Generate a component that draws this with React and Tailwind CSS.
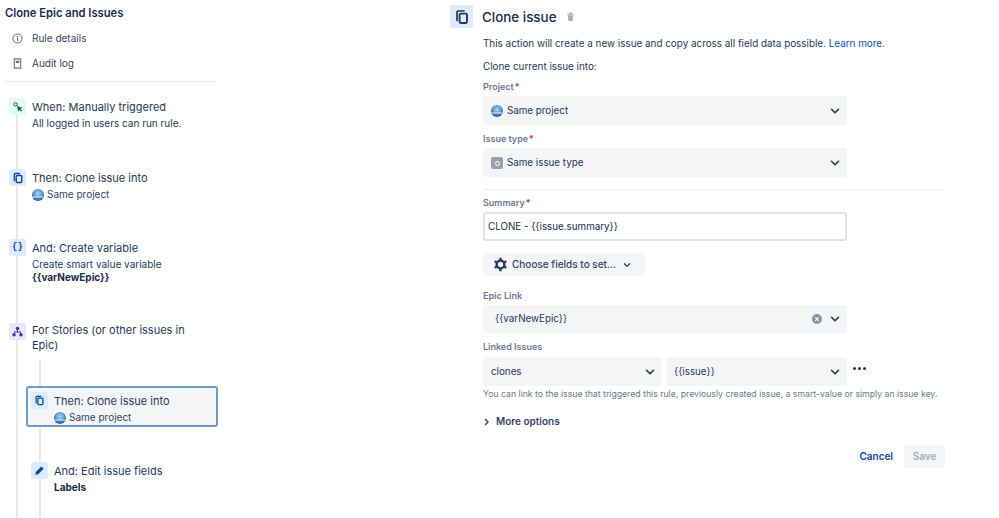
import React from "react";

const Chevron = ({ className = "" }) => (
  <svg width="12" height="12" viewBox="0 0 12 12" fill="none" className={className}>
    <path d="M2.5 4.3 6 7.8l3.5-3.5" stroke="#253858" strokeWidth="1.6" strokeLinecap="round" strokeLinejoin="round" />
  </svg>
);

const Globe = ({ size = 12 }) => (
  <svg width={size} height={size} viewBox="0 0 12 12" className="shrink-0">
    <defs>
      <radialGradient id="gl" cx="0.5" cy="0.38" r="0.55">
        <stop offset="0" stopColor="#a9d3f2" />
        <stop offset="0.6" stopColor="#5b9fdc" />
        <stop offset="1" stopColor="#1f64a8" />
      </radialGradient>
    </defs>
    <circle cx="6" cy="6" r="6" fill="url(#gl)" />
    <path d="M.9 8.400h10.200A6 6 0 0 1 .9 8.400z" fill="#4a6fb5" />
    <path d="M.5 7.600h11l-.4.9H.9z" fill="#eef2f8" />
  </svg>
);

const CopyIcon = ({ size = 12, color = "#253858" }) => (
  <svg width={size} height={size} viewBox="0 0 16 16" fill="none">
    <path d="M3 11.5V3.2C3 2.5 3.5 2 4.2 2H10" stroke={color} strokeWidth="1.7" strokeLinecap="round" />
    <rect x="5.6" y="4.6" width="7.4" height="9.4" rx="1.2" stroke={color} strokeWidth="1.9" />
  </svg>
);

const Tile = ({ bg = "bg-[#deebff]", children }) => (
  <div className={`relative z-10 flex h-[17px] w-[17px] shrink-0 items-center justify-center rounded-[2px] ${bg}`}>{children}</div>
);

const Step = ({ tile, title, children, className = "", pad = "pt-[2px]", titleClass = "" }) => (
  <div className={`flex gap-[6px] ${className}`}>
    {tile}
    <div className={`min-w-0 flex-1 ${pad}`}>
      <div className={`text-[11px] leading-[15px] text-[#253858] ${titleClass}`}>{title}</div>
      {children}
    </div>
  </div>
);

const Sub = ({ children, bold }) => (
  <div className={`text-[10px] leading-[13px] ${bold ? "font-bold text-[#172b4d]" : "text-[#253858]"}`}>{children}</div>
);

const SameProject = () => (
  <div className="mt-[2px] flex items-center gap-[3px] text-[10px] leading-[13px] text-[#344563]">
    <Globe />
    <span>Same project</span>
  </div>
);

const Label = ({ children, req, className = "" }) => (
  <div className={`text-[9px] font-semibold leading-[12px] text-[#6b778c] ${className}`}>
    {children}
    {req && <span className="ml-[1px] text-[#de350b]">*</span>}
  </div>
);

const Select = ({ children, h = "h-[29px]", className = "", right }) => (
  <div className={`flex ${h} items-center rounded-[3px] bg-[#f4f5f7] pl-[8px] pr-[6px] text-[9.8px] text-[#253858] ${className}`}>
    <div className="flex min-w-0 flex-1 items-center gap-[4px] pt-[1px]">{children}</div>
    {right}
    <Chevron />
  </div>
);

export default function App() {
  return (
    <div className="flex h-[518px] w-[999px] overflow-hidden bg-white font-['Inter','Liberation_Sans',sans-serif]">
      {/* left rail */}
      <aside className="relative w-[450px] shrink-0 pl-[5px]">
        <h1 className="pt-[6px] text-[11.2px] font-semibold leading-[15px] text-[#172b4d]">Clone Epic and Issues</h1>
        <nav className="mt-[10px] text-[10px] text-[#344563]">
          <div className="flex h-[14px] items-center gap-[9px] pl-[7px]">
            <svg width="11" height="11" viewBox="0 0 12 12" fill="none">
              <circle cx="6" cy="6" r="5" stroke="#505f79" strokeWidth="1" />
              <path d="M6 5.500v3M6 3.400v.9" stroke="#505f79" strokeWidth="1.100" />
            </svg>
            <span>Rule details</span>
          </div>
          <div className="mt-[11px] flex h-[14px] items-center gap-[9px] pl-[7px]">
            <svg width="11" height="11" viewBox="0 0 12 12" fill="none">
              <path d="M2.500 1h7v10h-7z" stroke="#6b778c" strokeWidth="1.200" />
              <path d="M4 3h4v2.500H4z" fill="#6b778c" />
            </svg>
            <span>Audit log</span>
          </div>
        </nav>
        <div className="mt-[11px] h-[1px] w-[211px] bg-[#e4e6ea]" />

        {/* rule tree */}
        <div className="relative mt-[16px] w-[213px] pl-[4px]">
          <div className="absolute bottom-0 left-[11px] top-[10px] w-[2px] bg-[#e6e8ec]" />
          <Step
            tile={
              <Tile bg="bg-[#e3fcef]">
                <svg width="12" height="12" viewBox="0 0 12 12" fill="none">
                  <circle cx="3.600" cy="3.400" r="1.700" stroke="#006644" strokeWidth="1" />
                  <path d="M5 5l5.400 1.700-2 1 1.800 1.800-1 1-1.800-1.800-1 2z" fill="#006644" />
                </svg>
              </Tile>
            }
            title="When: Manually triggered"
          >
            <div className="mt-[2px]"><Sub>All logged in users can run rule.</Sub></div>
          </Step>
          <Step className="mt-[39px]" tile={<Tile><CopyIcon size={12} color="#0747a6" /></Tile>} title="Then: Clone issue into">
            <SameProject />
          </Step>
          <Step
            className="mt-[38px]"
            tile={<Tile><span className="font-['Liberation_Mono',monospace] text-[9px] font-bold leading-none text-[#0747a6]">{"{}"}</span></Tile>}
            title="And: Create variable"
          >
            <div className="mt-[2px]"><Sub>Create smart value variable</Sub></div>
            <Sub bold>{"{{varNewEpic}}"}</Sub>
          </Step>
          <Step
            className="mt-[39px]"
            pad="pt-0"
            titleClass="max-w-[170px]"
            tile={
              <Tile bg="bg-[#eae6ff]">
                <svg width="11" height="11" viewBox="0 0 12 12" fill="#403294">
                  <circle cx="6" cy="2.800" r="1.900" />
                  <circle cx="2.200" cy="9.600" r="1.900" />
                  <circle cx="9.800" cy="9.600" r="1.900" />
                  <path d="M5.500 4h1v2h3.200v2h-1V7H3.300v1h-1V6h3.200z" />
                </svg>
              </Tile>
            }
            title="For Stories (or other issues in Epic)"
          />
          {/* nested */}
          <div className="relative mt-[33px] h-[132px]">
            <div className="absolute bottom-0 left-[30px] top-[-26px] w-[2px] bg-[#e6e8ec]" />
            <div className="relative ml-[17px] h-[41px] rounded-[3px] border-2 border-[#6f9bcb] bg-[#f4f5f7] pl-[3px] pt-[4px]">
              <Step tile={<Tile><CopyIcon size={11} color="#0747a6" /></Tile>} title="Then: Clone issue into">
                <SameProject />
              </Step>
            </div>
            <div className="relative ml-[22px] mt-[35px]">
              <Step
                tile={
                  <Tile>
                    <svg width="11" height="11" viewBox="0 0 12 12" fill="#0747a6">
                      <path d="M8 1.500 10.500 4 4.500 10l-3.200.7.700-3.200z" />
                    </svg>
                  </Tile>
                }
                title="And: Edit issue fields"
              >
                <div className="mt-[2px]"><Sub bold>Labels</Sub></div>
              </Step>
            </div>
          </div>
        </div>
      </aside>

      {/* config panel */}
      <main className="w-[495px] shrink-0 pt-[5px]">
        <header className="flex h-[23px] items-center">
          <div className="flex h-[23px] w-[23px] items-center justify-center rounded-[2px] bg-[#deebff]">
            <CopyIcon size={16} color="#253858" />
          </div>
          <h2 className="ml-[9px] pt-[1px] text-[13.4px] font-medium leading-[22px] text-[#172b4d]">Clone issue</h2>
          <svg width="11" height="11" viewBox="0 0 12 12" fill="#a5adba" className="ml-[8px]">
            <path d="M2 3h8v1H2zM4.500 1.500h3V3h-3zM3 4.500h6L8.300 11H3.700z" />
          </svg>
        </header>
        <div className="ml-[33px] w-[462px]">
          <p className="mt-[8px] text-[9.9px] leading-[15px] text-[#253858]">
            This action will create a new issue and copy across all field data possible.{" "}
            <span className="text-[#0052cc]">Learn more.</span>
          </p>
          <p className="mt-[8px] text-[9.9px] leading-[15px] text-[#253858]">Clone current issue into:</p>

          <Label req className="mt-[7px]">Project</Label>
          <Select className="mt-[3px] w-[364px]"><Globe /><span>Same project</span></Select>

          <Label req className="mt-[8px]">Issue type</Label>
          <Select className="mt-[3px] w-[364px]">
            <span className="flex h-[12px] w-[12px] items-center justify-center rounded-[2px] bg-[#97a0af]">
              <span className="h-[5px] w-[5px] rounded-full border border-white" />
            </span>
            <span>Same issue type</span>
          </Select>

          <div className="mt-[12px] h-[1px] w-[462px] bg-[#ebecf0]" />

          <Label req className="mt-[7px]">Summary</Label>
          <div className="mt-[3px] flex h-[29px] w-[364px] items-center rounded-[3px] border-2 border-[#dfe1e6] bg-white pl-[3px] pt-[2px] text-[9.8px] text-[#172b4d]">
            {"CLONE - {{issue.summary}}"}
          </div>

          <div className="mt-[12px] flex h-[23px] w-[162px] items-center rounded-[3px] bg-[#f4f5f7] pl-[10px] text-[10px] font-medium text-[#344563]">
            <svg width="15" height="15" viewBox="0 0 14 14" fill="none">
              <circle cx="7" cy="7" r="3.600" stroke="#253858" strokeWidth="2.200" />
              <path d="M7 .8v2M7 11.200v2M1.600 3.900l1.700 1M10.700 9.100l1.700 1M1.600 10.100l1.700-1M10.700 4.900l1.700-1" stroke="#253858" strokeWidth="2.200" />
            </svg>
            <span className="ml-[4px]">Choose fields to set...</span>
            <Chevron className="ml-[5px] scale-75" />
          </div>

          <Label className="mt-[14px]">Epic Link</Label>
          <Select
            h="h-[28px]"
            className="mt-[3px] w-[364px] pl-[12px]"
            right={
              <svg width="12" height="12" viewBox="0 0 12 12" className="mr-[6px]">
                <circle cx="6" cy="6" r="5" fill="#8993a4" />
                <path d="M4.200 4.200l3.600 3.600M7.800 4.200 4.200 7.800" stroke="#f4f5f7" strokeWidth="1.200" />
              </svg>
            }
          >
            {"{{varNewEpic}}"}
          </Select>

          <Label className="mt-[8px]">Linked Issues</Label>
          <div className="mt-[4px] flex items-start">
            <Select className="w-[179px]">clones</Select>
            <Select className="ml-[4px] w-[181px]">{"{{issue}}"}</Select>
            <div className="ml-[6px] mt-[10px] flex gap-[2px]">
              <span className="h-[3px] w-[3px] rounded-full bg-[#253858]" />
              <span className="h-[3px] w-[3px] rounded-full bg-[#253858]" />
              <span className="h-[3px] w-[3px] rounded-full bg-[#253858]" />
            </div>
          </div>
          <p className="mt-[2px] whitespace-nowrap text-[8.7px] leading-[13px] text-[#6b778c]">
            You can link to the issue that triggered this rule, previously created issue, a smart-value or simply an issue key.
          </p>

          <div className="mt-[13px] flex items-center text-[10px] font-semibold leading-[14px] text-[#344563]">
            <svg width="8" height="8" viewBox="0 0 8 8" fill="none" className="mt-[2px]">
              <path d="M2.500 1.500 5 4 2.500 6.500" stroke="#253858" strokeWidth="1.400" strokeLinecap="round" strokeLinejoin="round" />
            </svg>
            <span className="ml-[5px]">More options</span>
          </div>

          <div className="mt-[17px] flex items-center justify-end">
            <span className="text-[10px] font-semibold text-[#0747a6]">Cancel</span>
            <div className="ml-[11px] flex h-[23px] w-[41px] items-center justify-center rounded-[3px] bg-[#f4f5f7] text-[10px] font-semibold text-[#a5adba]">Save</div>
          </div>
        </div>
      </main>
    </div>
  );
}
